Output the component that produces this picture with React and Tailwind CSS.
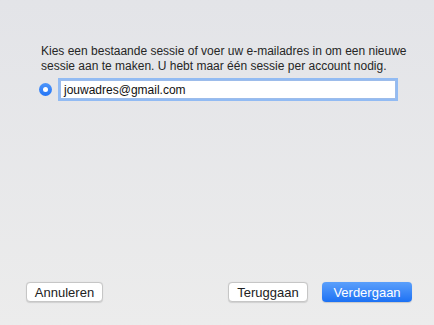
import React from 'react';

const SessionPicker = () => {
    return (
        <div className="h-[325px] w-[434px] flex flex-col bg-gradient-to-b from-[#e3e4e8] to-[#ececec] text-[#1f1f1f] font-['Liberation_Sans',Arial,sans-serif]">
            <div className="pl-[41px] pr-[20px] pt-[44px]">
                <p className="text-[12px] leading-[15px] text-[#262626] w-[372px]">
                    Kies een bestaande sessie of voer uw e-mailadres in om een nieuwe sessie aan te maken. U hebt maar één sessie per account nodig.
                </p>

                <div className="flex items-center mt-[6px] -ml-[2px]">
                    <div className="w-[13px] h-[13px] rounded-full bg-gradient-to-b from-[#4d95fa] to-[#2274f5] flex items-center justify-center shrink-0">
                        <div className="w-[5px] h-[5px] rounded-full bg-white" />
                    </div>
                    <div className="ml-[8px] w-[336px] h-[19px] bg-white border border-[#9dbcea] ring-[2px] ring-[#92bbf3] flex items-center px-[3px]">
                        <span className="text-[12px] text-[#111]">jouwadres@gmail.com</span>
                    </div>
                </div>
            </div>

            <div className="mt-auto flex items-center px-[26px] pb-[23px]">
                <button className="w-[77px] h-[20px] bg-white border border-[#c6c6c6] rounded-[4px] shadow-[0_0.5px_1px_rgba(0,0,0,0.12)] text-[13px] leading-none text-[#222]">
                    Annuleren
                </button>
                <div className="flex-1" />
                <button className="w-[80px] h-[20px] bg-white border border-[#c6c6c6] rounded-[4px] shadow-[0_0.5px_1px_rgba(0,0,0,0.12)] text-[13px] leading-none text-[#222]">
                    Teruggaan
                </button>
                <button className="ml-[14px] mr-[-4px] w-[90px] h-[20px] rounded-[4px] bg-gradient-to-b from-[#5a9ffb] to-[#1b71f4] text-[13px] leading-none text-white shadow-[0_0.5px_1px_rgba(0,0,0,0.15)]">
                    Verdergaan
                </button>
            </div>
        </div>
    );
};

export default SessionPicker;
